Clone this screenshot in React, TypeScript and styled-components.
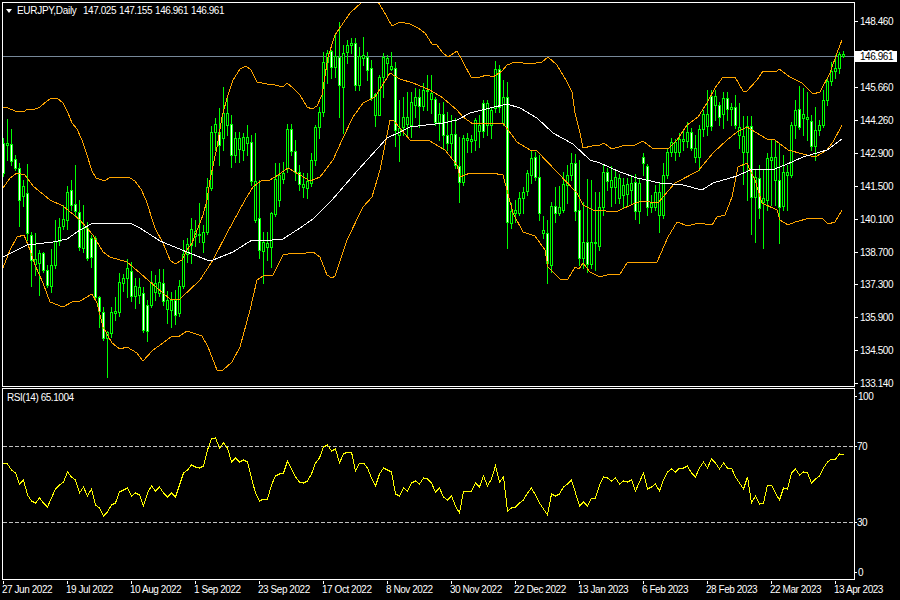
import React from 'react';
import styled, { createGlobalStyle } from 'styled-components';

const GlobalStyle = createGlobalStyle`
  html, body {
    margin: 0;
    background: #000;
    overflow: hidden;
  }
`;

const Terminal = styled.div`
  display: grid;
  grid-template-columns: 853px 45px;
  grid-template-rows: 385px 192px 20px;
  row-gap: 1px;
  width: 900px;
  height: 600px;
  box-sizing: border-box;
  padding: 2px 0 0 2px;
  background: #000;
  color: #fff;
  font-family: 'Liberation Sans', Arial, sans-serif;
  font-size: 10px;
  letter-spacing: -0.45px;
  line-height: 11px;
`;

const Panel = styled.div`
  position: relative;
  border: 1px solid #fff;
  overflow: hidden;
`;

const Plot = styled.svg`
  display: block;
  shape-rendering: crispEdges;
`;

const Legend = styled.div<{ $top: number; $left: number }>`
  position: absolute;
  top: ${({ $top }) => $top}px;
  left: ${({ $left }) => $left}px;
  display: flex;
  align-items: center;
  white-space: pre;
`;

const LegendArrow = styled.span`
  flex: none;
  width: 0;
  height: 0;
  margin-right: 5px;
  border-style: solid;
  border-width: 4px 3.5px 0;
  border-color: #fff transparent transparent;
`;

const LegendTitle = styled.span`
  flex: none;
  width: 66px;
  letter-spacing: -0.3px;
`;

const LegendValues = styled.span`
  word-spacing: 0.7px;
`;

const PriceScale = styled.div`
  position: relative;
  display: flex;
  flex-direction: column;
  padding-top: 3px;
`;

const ScaleRow = styled.div<{ $height: number; $tick: number; $gap: number; $offset?: number }>`
  display: flex;
  align-items: center;
  flex: none;
  height: ${({ $height }) => $height}px;
  margin-top: ${({ $offset }) => $offset ?? 0}px;

  &::before {
    content: '';
    width: ${({ $tick }) => $tick}px;
    height: 1px;
    margin-right: ${({ $gap }) => $gap}px;
    background: #fff;
  }
`;

const BidLabel = styled.div`
  position: absolute;
  top: 49px;
  left: 0;
  width: 42px;
  height: 11px;
  box-sizing: border-box;
  padding-left: 5px;
  background: #fff;
  color: #000;
  line-height: 11px;
`;

const RsiScale = styled.div`
  display: flex;
  flex-direction: column;
`;

const TimeScale = styled.div`
  display: flex;
  padding-left: 1px;
  grid-column: 1 / 3;
`;

const TimeCell = styled.div`
  flex: none;
  width: 64px;
  white-space: nowrap;

  &::before {
    content: '';
    display: block;
    width: 1px;
    height: 3px;
    background: #fff;
  }
`;

const TimeText = styled.span`
  display: block;
  margin-left: -1px;
`;

const PRICES = [
  '148.460', '147.060', '145.660', '144.260', '142.900', '141.500',
  '140.100', '138.700', '137.300', '135.900', '134.500', '133.140',
];

const DATES = [
  '27 Jun 2022', '19 Jul 2022', '10 Aug 2022', '1 Sep 2022', '23 Sep 2022',
  '17 Oct 2022', '8 Nov 2022', '30 Nov 2022', '22 Dec 2022', '13 Jan 2023',
  '6 Feb 2023', '28 Feb 2023', '22 Mar 2023', '13 Apr 2023',
];

// high, body top, body bottom, low, white body (all in screen pixels)
const CANDLES: number[][] = [
  [138,143,173,176,1],[119,143,145,160,0],[129,144,161,165,1],[155,159,168,170,1],[163,168,200,226,1],
  [180,186,196,206,0],[164,193,233,240,1],[232,235,260,286,1],[233,259,264,275,0],[250,253,263,295,0],
  [252,253,270,272,1],[265,270,285,287,1],[249,265,286,292,0],[220,241,265,268,0],[218,227,241,245,0],
  [205,219,226,229,0],[186,192,220,229,0],[180,190,205,210,1],[165,204,211,215,1],[200,212,247,250,1],
  [205,228,248,252,0],[222,228,258,260,1],[235,238,257,267,1],[236,238,297,300,1],[296,297,311,327,1],
  [307,312,338,340,1],[331,332,338,377,0],[307,312,333,337,0],[297,311,313,320,0],[273,282,312,316,0],
  [274,278,283,291,0],[259,268,278,297,0],[262,271,296,301,1],[278,286,296,308,0],[278,287,295,303,0],
  [287,293,330,332,1],[300,305,331,341,1],[271,282,305,307,0],[275,283,292,300,0],[269,282,293,296,0],
  [269,283,301,305,1],[291,300,309,323,0],[292,300,310,327,0],[290,300,315,324,1],[280,286,313,316,0],
  [240,254,286,288,0],[238,244,254,262,0],[218,229,245,263,0],[220,231,236,246,0],[203,234,234,242,0],
  [225,232,242,252,0],[178,187,232,234,0],[126,132,188,190,0],[118,124,132,150,0],[108,132,145,165,1],
  [87,113,138,150,0],[95,113,125,135,0],[115,124,155,167,1],[132,138,155,162,0],[132,138,149,162,0],
  [133,137,150,160,0],[125,137,143,155,0],[135,142,181,185,1],[133,181,220,222,0],[180,218,250,258,1],
  [232,242,251,283,0],[232,243,247,260,0],[212,213,247,267,0],[163,179,214,216,0],[163,175,200,206,0],
  [162,173,179,183,0],[124,129,168,172,0],[124,129,151,155,1],[140,151,172,180,1],[165,172,184,190,1],
  [173,184,187,197,0],[173,181,188,198,0],[153,160,183,186,0],[125,127,160,165,0],[107,112,127,138,0],
  [52,62,112,116,0],[50,53,62,83,0],[50,51,67,78,1],[33,56,67,77,0],[22,57,85,117,1],
  [45,53,87,133,0],[40,45,52,63,0],[38,43,45,53,0],[38,43,85,90,1],[47,56,85,90,0],
  [37,55,58,65,0],[52,57,70,80,1],[60,68,98,100,1],[93,94,115,126,0],[75,77,115,115,0],
  [53,57,77,97,0],[55,58,63,75,0],[52,66,69,70,0],[62,68,130,146,1],[100,128,135,161,0],
  [97,117,127,135,0],[92,117,124,137,0],[92,102,125,137,0],[88,97,105,117,0],[89,97,106,127,1],
  [83,90,106,110,0],[75,90,91,110,0],[75,93,99,113,0],[97,99,122,125,1],[103,114,122,140,0],
  [102,114,135,148,1],[112,135,143,150,1],[115,134,143,156,0],[118,134,165,168,1],[137,166,182,202,1],
  [135,138,182,185,0],[133,138,140,152,0],[135,139,141,152,0],[118,120,140,150,0],[115,125,131,147,0],
  [100,103,131,137,1],[100,103,125,135,0],[107,110,125,138,0],[61,69,108,112,0],[65,69,107,112,1],
  [80,97,123,125,0],[82,97,222,248,1],[203,211,223,228,0],[200,210,213,222,0],[192,198,213,215,0],
  [187,192,198,213,0],[170,173,191,195,0],[150,158,175,183,0],[152,157,177,180,1],[155,177,213,220,1],
  [216,230,233,238,0],[220,233,263,283,1],[202,206,265,272,0],[187,206,213,222,1],[186,207,213,215,0],
  [172,184,210,212,0],[165,175,185,203,0],[153,163,175,180,0],[154,163,211,220,1],[160,210,258,265,1],
  [202,242,258,268,0],[179,242,264,272,1],[180,242,264,268,0],[192,242,242,270,0],[192,207,246,250,0],
  [165,172,207,215,0],[168,172,181,190,1],[166,180,187,206,0],[170,177,187,203,0],[174,178,198,203,0],
  [178,185,195,208,0],[178,184,194,206,0],[175,183,190,204,0],[174,182,211,219,1],[178,183,211,223,0],
  [153,157,163,175,1],[164,166,207,215,1],[195,203,207,212,0],[185,192,207,210,0],[183,192,215,232,0],
  [163,175,215,218,0],[148,152,175,178,0],[138,142,152,156,0],[139,142,152,160,0],[133,139,152,156,0],
  [131,139,141,150,0],[122,132,141,147,0],[128,132,148,150,1],[135,148,157,162,0],[125,129,157,170,0],
  [110,114,129,136,0],[90,114,126,135,0],[90,96,126,130,1],[90,96,105,120,0],[102,105,117,125,1],
  [92,98,114,128,0],[92,98,109,120,1],[103,107,109,125,0],[95,107,125,128,1],[103,127,135,148,0],
  [116,136,152,184,0],[116,126,152,200,0],[116,126,197,234,1],[170,177,197,242,0],[165,178,208,218,1],
  [170,198,202,248,0],[153,158,200,210,0],[140,157,160,205,0],[140,157,180,205,0],[143,180,207,243,1],
  [155,172,206,210,0],[165,172,175,210,0],[122,125,175,177,0],[100,110,125,138,0],[86,109,127,129,1],
  [88,114,118,135,0],[92,117,119,140,0],[115,121,146,150,1],[107,130,146,160,0],[120,125,130,135,0],
  [90,100,125,127,0],[78,81,100,105,0],[62,71,81,85,0],[55,68,71,78,0],[52,54,68,73,0],
  [51,54,56,57,0],
];

const UPPER = '3,107 8,108 15,111 23,112 28,109 33,110 40,107 47,101 52,98 57,98 63,103 68,113 72,123 77,129 82,140 87,155 92,171 96,178 102,180 105,181 110,177 118,177 130,178 135,181 141,189 146,200 155,228 163,243 170,260 175,264 182,260 187,250 192,243 203,215 207,200 210,180 217,147 222,117 227,98 233,80 240,69 246,66 251,70 257,82 267,84 275,85 283,87 287,83 293,88 300,95 307,107 312,109 317,106 322,95 328,57 335,35 350,13 362,2 368,-3 374,-3 378,2 383,10 392,26 400,22 410,24 418,28 425,33 432,44 437,45 443,53 448,57 457,51 463,62 471,77 480,77 487,75 493,77 502,71 507,65 515,62 530,64 542,62 548,57 557,65 567,82 572,92 575,113 580,133 583,148 592,146 600,145 604,143 612,149 622,146 635,145 643,141 652,148 668,149 677,140 687,125 698,117 707,103 715,88 723,77 735,77 743,91 747,91 757,80 763,71 777,71 779,69 790,77 802,83 813,94 820,92 830,73 837,53 842,40';
const MIDDLE = '3,188 10,178 17,173 25,175 33,186 50,200 63,206 80,220 93,235 103,252 110,257 127,262 140,273 157,288 170,299 180,299 200,280 213,260 227,233 245,200 253,187 262,180 270,180 278,175 288,168 300,175 310,181 320,177 333,160 343,138 353,117 363,103 375,97 390,73 400,79 413,83 430,90 443,98 457,110 463,117 473,124 503,123 517,142 530,150 537,151 557,172 577,193 583,205 593,210 600,210 612,212 618,211 633,204 642,201 658,203 663,197 675,183 698,171 713,153 727,140 737,132 747,127 760,135 767,139 775,140 788,150 803,154 815,157 827,150 833,142 842,125';
const LOWER = '3,268 10,250 17,237 24,235 30,250 35,265 43,283 50,302 63,307 72,302 80,301 92,294 97,303 103,327 112,343 120,349 127,347 137,353 143,361 153,350 163,343 172,336 178,337 187,331 202,336 208,347 217,370 223,370 232,362 240,347 250,310 257,280 263,276 273,275 283,255 293,253 300,254 313,252 320,257 327,275 332,278 335,276 347,240 363,207 372,197 380,170 390,120 393,120 400,128 410,140 428,140 445,150 457,165 460,177 470,173 492,173 503,175 507,190 513,213 523,232 535,236 545,250 548,267 560,279 568,279 575,267 579,269 583,263 590,272 600,277 610,274 620,274 627,263 642,262 657,262 668,237 677,222 688,226 698,223 712,225 717,217 725,215 732,197 738,167 747,163 750,170 755,180 762,203 777,210 780,220 788,225 795,222 810,218 822,218 828,224 835,222 842,210';
const AVERAGE = '3,257 13,252 27,245 53,242 67,239 80,230 93,223 117,224 130,223 140,228 160,241 187,252 207,260 213,260 233,252 252,240 262,241 283,239 300,228 313,219 332,200 358,170 387,138 400,132 410,127 443,123 457,120 470,113 490,108 507,104 520,108 537,118 553,133 573,144 590,160 600,163 620,172 637,178 660,183 683,185 702,190 713,183 737,176 750,170 775,169 792,162 803,157 827,150 842,139';

// rsi per bar, read at 3x above y = 400
const RSI = [
  190,192,210,218,252,241,285,303,310,295,310,322,295,268,255,245,217,232,240,280,260,288,268,315,325,
  347,335,315,308,275,270,263,288,278,285,318,280,258,272,260,280,290,278,292,255,218,210,196,202,203,
  198,150,118,115,145,128,145,187,175,187,179,185,235,280,303,297,298,255,227,223,218,182,207,232,247,
  250,243,222,190,173,140,135,153,148,188,162,157,157,212,190,190,205,235,258,222,205,210,215,283,287,
  265,272,250,243,252,235,237,250,277,265,292,300,287,318,340,273,273,273,250,262,227,257,238,197,245,
  232,333,323,322,308,300,280,265,285,310,327,345,283,288,282,262,253,240,280,318,305,318,295,295,255,
  230,235,243,235,252,244,247,240,273,245,220,267,262,253,273,240,215,207,217,205,205,198,220,232,205,
  187,205,178,190,208,190,205,203,230,250,268,232,310,287,313,308,256,256,280,300,265,268,220,208,226,
  217,220,250,236,228,205,187,178,178,163,166,
];

const rsiPoints = RSI.map((z, i) => `${3.5 + 4 * i},${(400 + z / 3).toFixed(0)}`).join(' ');

const Candle: React.FC<{ index: number; bar: number[] }> = ({ index, bar }) => {
  const [high, top, bottom, low, white] = bar;
  const x = 3.5 + 4 * index;
  return (
    <g>
      <line x1={x} x2={x} y1={high} y2={low + 1} stroke="#00ff00" />
      <rect
        x={x - 1}
        y={top + 0.5}
        width={2}
        height={Math.max(bottom - top, 1)}
        fill={white ? '#fff' : '#000'}
        stroke="#00ff00"
      />
    </g>
  );
};

const PriceChart: React.FC = () => (
  <Plot width={851} height={383} viewBox="3 3 851 383">
    <line x1={3} x2={854} y1={56.5} y2={56.5} stroke="#778899" />
    {CANDLES.map((bar, i) => (
      <Candle key={i} index={i} bar={bar} />
    ))}
    <polyline points={UPPER} fill="none" stroke="#ffa500" />
    <polyline points={MIDDLE} fill="none" stroke="#ffa500" />
    <polyline points={LOWER} fill="none" stroke="#ffa500" />
    <polyline points={AVERAGE} fill="none" stroke="#fff" />
  </Plot>
);

const RsiChart: React.FC = () => (
  <Plot width={851} height={190} viewBox="3 389 851 190">
    <line x1={3} x2={854} y1={446.5} y2={446.5} stroke="#c0c0c0" strokeDasharray="4 2" />
    <line x1={3} x2={854} y1={522.5} y2={522.5} stroke="#c0c0c0" strokeDasharray="4 2" />
    <polyline points={rsiPoints} fill="none" stroke="#ffff00" />
  </Plot>
);

export default function App() {
  return (
    <Terminal>
      <GlobalStyle />
      <Panel>
        <PriceChart />
        <Legend $top={2} $left={3}>
          <LegendArrow />
          <LegendTitle>EURJPY,Daily</LegendTitle>
          <LegendValues>147.025 147.155 146.961 146.961</LegendValues>
        </Legend>
      </Panel>
      <PriceScale>
        {PRICES.map((price) => (
          <ScaleRow key={price} $height={32.95} $tick={3} $gap={2}>
            {price}
          </ScaleRow>
        ))}
        <BidLabel>146.961</BidLabel>
      </PriceScale>

      <Panel>
        <RsiChart />
        <Legend $top={3} $left={4}>RSI(14) 65.1004</Legend>
      </Panel>
      <RsiScale>
        <ScaleRow $height={12} $tick={2} $gap={1} $offset={2}>100</ScaleRow>
        <ScaleRow $height={12} $tick={2} $gap={0} $offset={38.5}>70</ScaleRow>
        <ScaleRow $height={12} $tick={2} $gap={0} $offset={64}>30</ScaleRow>
        <ScaleRow $height={12} $tick={2} $gap={1} $offset={38}>0</ScaleRow>
      </RsiScale>

      <TimeScale>
        {DATES.map((date) => (
          <TimeCell key={date}>
            <TimeText>{date}</TimeText>
          </TimeCell>
        ))}
      </TimeScale>
    </Terminal>
  );
}
